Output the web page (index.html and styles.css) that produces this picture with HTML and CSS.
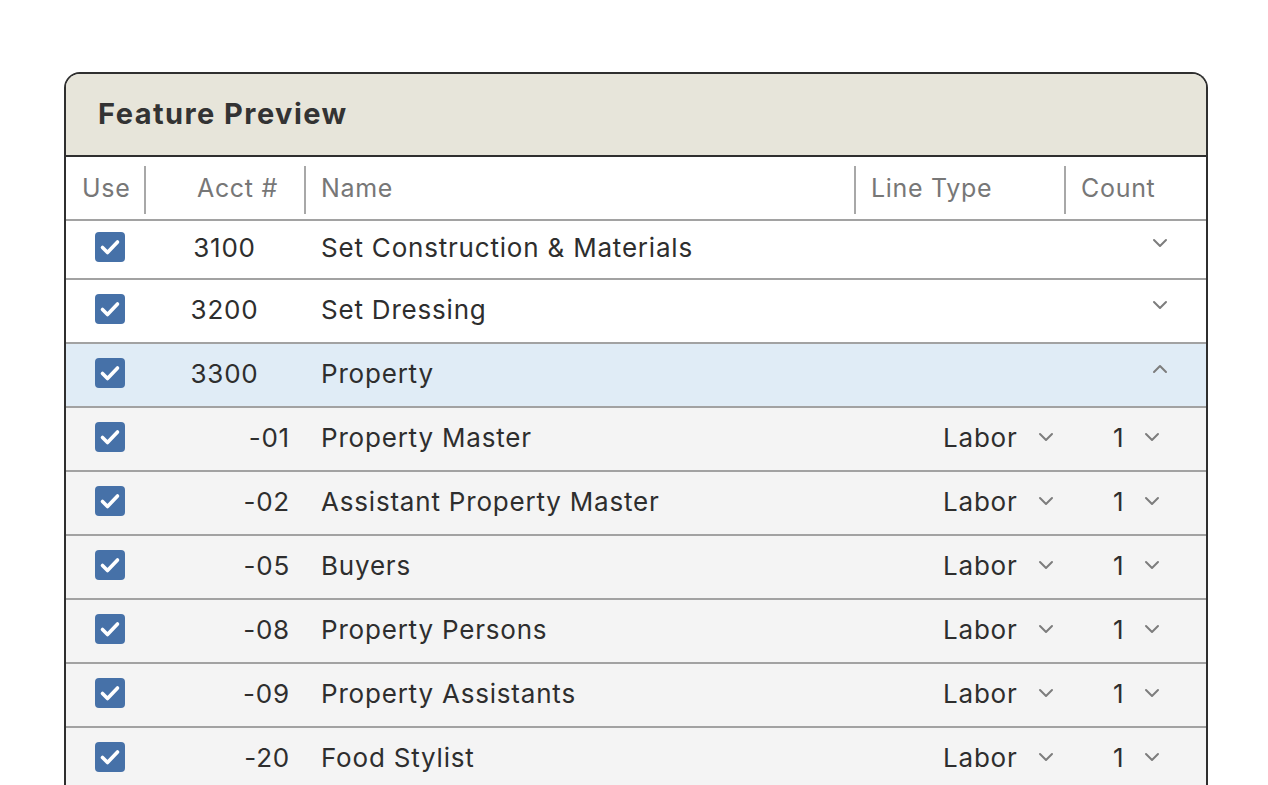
FILE: index.html
```html
<!DOCTYPE html>
<html>
<head>
<meta charset="utf-8">
<link rel="stylesheet" href="styles.css">
</head>
<body>
<div class="page">
  <section class="card">
    <header class="card-head">Feature Preview</header>
    <div class="row head">
      <div class="c use"><span>Use</span></div>
      <div class="c acct sep"><span>Acct #</span></div>
      <div class="c name sep"><span>Name</span></div>
      <div class="c type sep"><span>Line Type</span></div>
      <div class="c count sep"><span>Count</span></div>
    </div>

    <div class="row parent first">
      <div class="c use"><span class="cb"><svg viewBox="0 0 30 30"><path d="M7.5 15.5l5 5L22.5 10"/></svg></span></div>
      <div class="c acct num-center">3100</div>
      <div class="c name">Set Construction &amp; Materials</div>
      <div class="c type"></div>
      <div class="c count end"><svg class="chev" viewBox="0 0 16 10"><path d="M2 2l6 6 6-6"/></svg></div>
    </div>
    <div class="row parent">
      <div class="c use"><span class="cb"><svg viewBox="0 0 30 30"><path d="M7.5 15.5l5 5L22.5 10"/></svg></span></div>
      <div class="c acct num-center">3200</div>
      <div class="c name">Set Dressing</div>
      <div class="c type"></div>
      <div class="c count end"><svg class="chev" viewBox="0 0 16 10"><path d="M2 2l6 6 6-6"/></svg></div>
    </div>
    <div class="row parent open">
      <div class="c use"><span class="cb"><svg viewBox="0 0 30 30"><path d="M7.5 15.5l5 5L22.5 10"/></svg></span></div>
      <div class="c acct num-center">3300</div>
      <div class="c name">Property</div>
      <div class="c type"></div>
      <div class="c count end"><svg class="chev" viewBox="0 0 16 10"><path d="M2 8l6-6 6 6"/></svg></div>
    </div>

    <div class="row child">
      <div class="c use"><span class="cb"><svg viewBox="0 0 30 30"><path d="M7.5 15.5l5 5L22.5 10"/></svg></span></div>
      <div class="c acct num-right">-01</div>
      <div class="c name">Property Master</div>
      <div class="c type sel"><span>Labor</span><svg class="chev" viewBox="0 0 16 10"><path d="M2 2l6 6 6-6"/></svg></div>
      <div class="c count sel"><span>1</span><svg class="chev" viewBox="0 0 16 10"><path d="M2 2l6 6 6-6"/></svg></div>
    </div>
    <div class="row child">
      <div class="c use"><span class="cb"><svg viewBox="0 0 30 30"><path d="M7.5 15.5l5 5L22.5 10"/></svg></span></div>
      <div class="c acct num-right">-02</div>
      <div class="c name">Assistant Property Master</div>
      <div class="c type sel"><span>Labor</span><svg class="chev" viewBox="0 0 16 10"><path d="M2 2l6 6 6-6"/></svg></div>
      <div class="c count sel"><span>1</span><svg class="chev" viewBox="0 0 16 10"><path d="M2 2l6 6 6-6"/></svg></div>
    </div>
    <div class="row child">
      <div class="c use"><span class="cb"><svg viewBox="0 0 30 30"><path d="M7.5 15.5l5 5L22.5 10"/></svg></span></div>
      <div class="c acct num-right">-05</div>
      <div class="c name">Buyers</div>
      <div class="c type sel"><span>Labor</span><svg class="chev" viewBox="0 0 16 10"><path d="M2 2l6 6 6-6"/></svg></div>
      <div class="c count sel"><span>1</span><svg class="chev" viewBox="0 0 16 10"><path d="M2 2l6 6 6-6"/></svg></div>
    </div>
    <div class="row child">
      <div class="c use"><span class="cb"><svg viewBox="0 0 30 30"><path d="M7.5 15.5l5 5L22.5 10"/></svg></span></div>
      <div class="c acct num-right">-08</div>
      <div class="c name">Property Persons</div>
      <div class="c type sel"><span>Labor</span><svg class="chev" viewBox="0 0 16 10"><path d="M2 2l6 6 6-6"/></svg></div>
      <div class="c count sel"><span>1</span><svg class="chev" viewBox="0 0 16 10"><path d="M2 2l6 6 6-6"/></svg></div>
    </div>
    <div class="row child">
      <div class="c use"><span class="cb"><svg viewBox="0 0 30 30"><path d="M7.5 15.5l5 5L22.5 10"/></svg></span></div>
      <div class="c acct num-right">-09</div>
      <div class="c name">Property Assistants</div>
      <div class="c type sel"><span>Labor</span><svg class="chev" viewBox="0 0 16 10"><path d="M2 2l6 6 6-6"/></svg></div>
      <div class="c count sel"><span>1</span><svg class="chev" viewBox="0 0 16 10"><path d="M2 2l6 6 6-6"/></svg></div>
    </div>
    <div class="row child">
      <div class="c use"><span class="cb"><svg viewBox="0 0 30 30"><path d="M7.5 15.5l5 5L22.5 10"/></svg></span></div>
      <div class="c acct num-right">-20</div>
      <div class="c name">Food Stylist</div>
      <div class="c type sel"><span>Labor</span><svg class="chev" viewBox="0 0 16 10"><path d="M2 2l6 6 6-6"/></svg></div>
      <div class="c count sel"><span>1</span><svg class="chev" viewBox="0 0 16 10"><path d="M2 2l6 6 6-6"/></svg></div>
    </div>
  </section>
</div>
</body>
</html>
```

FILE: styles.css
```css
* { box-sizing: border-box; }
html, body { margin: 0; padding: 0; background: #ffffff; }
body {
  font-family: Inter, "Noto Sans", "Liberation Sans", sans-serif;
  color: #2e2e2e;
  overflow: hidden;
  height: 785px;
}
.page { padding: 72px 60px 0 64px; }
.card {
  width: 1144px;
  border: 2px solid #2f2f2f;
  border-bottom: none;
  border-radius: 16px 16px 0 0;
  overflow: hidden;
}
.card-head {
  background: #e7e5da;
  height: 83px;
  border-bottom: 2px solid #2f2f2f;
  padding: 0 0 2px 32px;
  display: flex;
  align-items: center;
  font-size: 29px;
  font-weight: 700;
  letter-spacing: 1.45px;
  color: #333333;
}
.row {
  display: grid;
  grid-template-columns: 78px 160px 550px 210px 142px;
  height: 64px;
  padding-bottom: 4px;
  border-bottom: 2px solid #a2a2a2;
  font-size: 26px;
  letter-spacing: 0.8px;
  background: #ffffff;
}
.row.first { height: 59px; padding-bottom: 5px; }
.row.open { background: #e0ecf6; }
.row.child { background: #f4f4f4; }
.c { display: flex; align-items: center; min-width: 0; }
.head { height: 64px; padding-bottom: 0; color: #777777; font-size: 25px; letter-spacing: 0.7px; }
.head .c { position: relative; }
.head .sep::before {
  content: "";
  position: absolute;
  left: 0; top: 9px; bottom: 5px;
  width: 2px;
  background: #a8a8a8;
}
.head .use { padding-left: 16px; }
.head .acct { justify-content: flex-end; padding-right: 26px; }
.head .name, .head .type, .head .count { padding-left: 17px; }
.use { padding-left: 29px; }
.cb {
  width: 30px; height: 30px;
  border-radius: 4px;
  background: #4671a8;
  display: flex;
}
.cb svg { width: 30px; height: 30px; }
.cb path { fill: none; stroke: #ffffff; stroke-width: 3.6; stroke-linecap: round; stroke-linejoin: round; }
.num-center { justify-content: center; padding-left: 1px; }
.num-right { justify-content: flex-end; padding-right: 14px; }
.name { padding-left: 17px; white-space: nowrap; }
.chev { width: 16px; height: 10px; }
.chev path { fill: none; stroke: #7d7d7d; stroke-width: 2; stroke-linecap: round; stroke-linejoin: round; }
.end { justify-content: flex-end; padding-right: 38px; padding-bottom: 8px; }
.type.sel { padding-left: 89px; }
.type.sel .chev { margin-left: 20px; }
.count.sel { padding-left: 49px; }
.count.sel .chev { margin-left: 20px; }
```
